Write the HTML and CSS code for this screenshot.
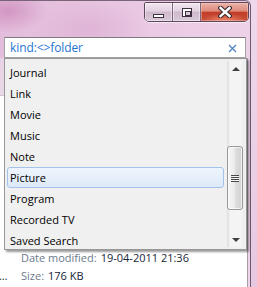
FILE: index.html
```html
<!DOCTYPE html>
<html>
<head>
<meta charset="utf-8">
<link rel="stylesheet" href="styles.css">
</head>
<body>
<div class="screen">
  <div class="window">
    <div class="titlebar">
      <div class="caption">
        <span class="cbtn min"><i class="min-glyph"></i></span>
        <span class="cbtn max"><i class="max-glyph"></i></span>
        <span class="cbtn close">
          <svg width="14" height="12" viewBox="0 0 14 12">
            <path d="M2.5 2 L11.5 10 M11.5 2 L2.5 10" stroke="#3b2a2a" stroke-width="4.6" stroke-linecap="square" fill="none"/>
            <path d="M2.5 2 L11.5 10 M11.5 2 L2.5 10" stroke="#ffffff" stroke-width="2.4" stroke-linecap="square" fill="none"/>
          </svg>
        </span>
      </div>
    </div>
    <div class="searchrow">
      <div class="search">
        <span class="query">kind:&lt;&gt;folder</span>
        <svg class="clear" width="9" height="9" viewBox="0 0 9 9">
          <path d="M1 1 L8 8 M8 1 L1 8" stroke="#4f83c4" stroke-width="1.3" fill="none"/>
        </svg>
      </div>
    </div>
    <div class="body">
      <div class="band"></div>
      <div class="details">
        <div class="drow"><span class="navfrag"></span><span class="label">Date modified:</span><span class="value">19-04-2011 21:36</span></div>
        <div class="drow"><span class="navfrag">…</span><span class="label">Size:</span><span class="value">176 KB</span></div>
      </div>
    </div>
  </div>

  <div class="dropdown">
    <ul class="items">
      <li class="item">Journal</li>
      <li class="item">Link</li>
      <li class="item">Movie</li>
      <li class="item">Music</li>
      <li class="item">Note</li>
      <li class="item active">Picture</li>
      <li class="item">Program</li>
      <li class="item">Recorded TV</li>
      <li class="item">Saved Search</li>
    </ul>
    <div class="scrollbar">
      <div class="sbtn"><i class="arrow up"></i></div>
      <div class="track">
        <div class="thumb" style="margin-top:68px;height:64px"><i class="grip"></i></div>
      </div>
      <div class="sbtn"><i class="arrow down"></i></div>
    </div>
  </div>
</div>
</body>
</html>
```

FILE: styles.css
```css
* { box-sizing: border-box; }
html, body { margin: 0; padding: 0; }
body {
  font-family: "Open Sans", "Noto Sans", sans-serif;
  font-size: 11px;
  background: #ecd3e8;
}
.screen {
  position: relative;
  width: 257px;
  height: 287px;
  overflow: hidden;
  background: linear-gradient(180deg, #efd8eb, #e6c9e1);
}
.window {
  width: 251px;
  height: 287px;
  border-top: 1px solid #7a6478;
  border-right: 1px solid #6f586d;
  border-top-right-radius: 6px;
  display: flex;
  flex-direction: column;
  background:
    radial-gradient(ellipse 40px 22px at 8px 10px, rgba(196,120,176,0.55), rgba(196,120,176,0) 100%),
    radial-gradient(ellipse 60px 30px at 90px 28px, rgba(214,160,202,0.45), rgba(214,160,202,0) 100%),
    linear-gradient(100deg, #e3bcdb 0%, #e9c8e3 45%, #eed5e9 100%);
}
.titlebar {
  height: 21px;
  display: flex;
  justify-content: flex-end;
  padding-right: 1px;
  padding-top: 1px;
}
.caption {
  display: flex;
  height: 20px;
  border: 1px solid #5d4759;
  border-radius: 2px 2px 5px 5px;
  overflow: hidden;
  box-shadow: 0 1px 0 rgba(255,255,255,0.6);
}
.cbtn {
  display: flex;
  align-items: center;
  justify-content: center;
  height: 18px;
}
.min, .max {
  width: 28px;
  background: linear-gradient(180deg, #f2e6f0 0%, #e2d1df 45%, #cfb9cc 50%, #d9c8d7 100%);
  border-right: 1px solid #7c6878;
  box-shadow: inset 0 0 0 1px rgba(255,255,255,0.45);
}
.close {
  width: 47px;
  background:
    radial-gradient(ellipse 22px 8px at 50% 100%, rgba(240,140,110,0.9), rgba(240,140,110,0) 100%),
    linear-gradient(180deg, #eab2a6 0%, #dd8a7a 45%, #c23d27 52%, #c9503a 100%);
  box-shadow: inset 0 0 0 1px rgba(255,220,210,0.4);
}
.min-glyph {
  display: block;
  width: 11px;
  height: 4px;
  margin-top: 7px;
  background: #fff;
  border: 1px solid #3e3040;
}
.max-glyph {
  display: block;
  width: 10px;
  height: 9px;
  margin-top: 0;
  border: 1px solid #3e3040;
  background: #fff;
  position: relative;
}
.max-glyph::after {
  content: "";
  position: absolute;
  left: 2px; top: 2px;
  width: 4px; height: 3px;
  border: 1px solid #3e3040;
  background: #d9c9d7;
}
.searchrow {
  padding: 15px 0 0 4px;
}
.search {
  width: 242px;
  height: 21px;
  background: #fff;
  border: 1px solid #a3a3a3;
  border-top-color: #7b7b7b;
  display: flex;
  align-items: center;
  padding-left: 5px;
  padding-right: 8px;
}
.query {
  flex: 1;
  color: #2674d2;
  font-size: 12px;
  letter-spacing: -0.1px;
}
.clear { display: block; margin-top: 1px; }
.body {
  flex: 1;
  margin-right: 2px;
  background: #fff;
  border-right: 1px solid #a99ea8;
  display: flex;
  flex-direction: column;
}
.band {
  height: 38px;
  background: linear-gradient(180deg, #e8d2e5, #ead8e8);
  border-bottom: 1px solid #cfc6d0;
}
.details {
  margin-top: auto;
  padding-bottom: 2px;
}
.drow {
  display: flex;
  height: 18px;
  line-height: 18px;
  white-space: nowrap;
}
.navfrag {
  width: 22px;
  color: #1b2838;
  margin-left: -1px;
}
.label { color: #6c7a8c; margin-right: 4px; }
.value { color: #18263a; }

.dropdown {
  position: absolute;
  left: 4px;
  top: 58px;
  width: 243px;
  height: 192px;
  background: #f0f0f0;
  border: 1px solid #979797;
  box-shadow: 2px 2px 2px rgba(0,0,0,0.4);
  padding: 2px;
  display: flex;
  gap: 3px;
}
.items {
  list-style: none;
  margin: 0;
  padding: 1px 0 0;
  flex: 1;
  overflow: hidden;
}
.item {
  height: 21px;
  line-height: 19px;
  padding-left: 2px;
  border: 1px solid transparent;
  border-radius: 3px;
  color: #000;
}
.item.active {
  border-color: #a4c3ea;
  background: linear-gradient(180deg, #eef4fc 0%, #dde9f8 100%);
}
.scrollbar {
  width: 17px;
  display: flex;
  flex-direction: column;
  background: linear-gradient(90deg, #e4e4e4 0%, #f4f4f4 15%, #f4f4f4 85%, #ebebeb 100%);
  border-left: 1px solid #e2e2e2;
}
.sbtn {
  height: 17px;
  display: flex;
  align-items: center;
  justify-content: center;
}
.arrow {
  display: block;
  width: 0; height: 0;
  border-left: 4px solid transparent;
  border-right: 4px solid transparent;
}
.arrow.up { border-bottom: 4px solid #404040; margin-top: -2px; }
.arrow.down { border-top: 4px solid #404040; margin-top: 2px; }
.track { flex: 1; }
.thumb {
  width: 16px;
  margin-left: -1px;
  border: 1px solid #989898;
  border-radius: 3px;
  background: linear-gradient(90deg, #f6f6f6 0%, #ececec 45%, #dcdcdc 55%, #d2d2d2 100%);
  box-shadow: inset 0 0 0 1px rgba(255,255,255,0.7);
  display: flex;
  align-items: center;
  justify-content: center;
}
.grip {
  display: block;
  width: 8px;
  height: 7px;
  background: repeating-linear-gradient(180deg, #4a4a4a 0 1px, #f2f2f2 1px 2px);
}
```
